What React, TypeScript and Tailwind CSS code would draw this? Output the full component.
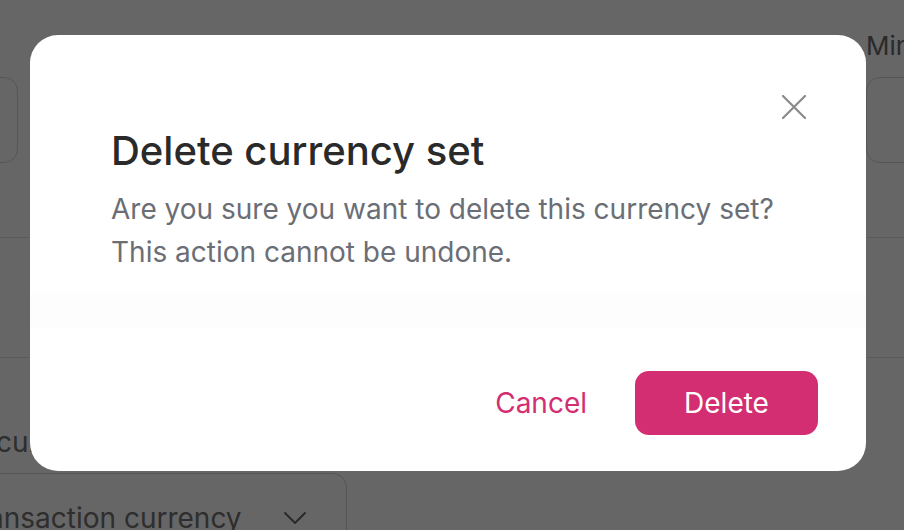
import { ChevronDown } from "lucide-react";

const CloseIcon = () => (
  <svg width="24" height="24" viewBox="0 0 24 24" fill="none">
    <path d="M1 1L23 23M23 1L1 23" stroke="#8a8a8a" strokeWidth="2.2" strokeLinecap="round" />
  </svg>
);

const BackgroundPage = () => (
  <div className="flex flex-col text-[#737373]">
    <div className="flex gap-[30px] pt-[28px]">
      <div className="ml-[-300px] w-[318px] shrink-0">
        <div className="h-[36px]" />
        <div className="mt-[13px] h-[86px] rounded-[14px] border border-[#d4d4d4]" />
      </div>
      <div className="w-[788px] shrink-0">
        <div className="h-[36px]" />
        <div className="mt-[13px] h-[86px] rounded-[14px] border border-[#d4d4d4]" />
      </div>
      <div className="w-[300px] shrink-0">
        <div className="h-[36px] text-[26px] leading-[36px] text-[#6a6a6a]">Min</div>
        <div className="mt-[13px] h-[86px] rounded-[14px] border border-[#d4d4d4]" />
      </div>
    </div>
    <div className="mt-[74px] border-t border-[#e2e2e2]" />
    <div className="mt-[119px] border-t border-[#e2e2e2]" />
    <p className="mt-[66px] ml-[-77px] text-[28px] leading-[36px]">Base currency</p>
    <div className="mt-[13px] ml-[-66px] flex h-[86px] w-[413px] items-center justify-between rounded-[14px] border border-[#d4d4d4] pl-[26px] pr-[31px] pt-[4px]">
      <span className="text-[28px] leading-[36px]">Transaction currency</span>
      <ChevronDown size={40} strokeWidth={1.2} className="text-[#6a6a6a]" />
    </div>
  </div>
);

export default function App() {
  return (
    <div className="relative h-[530px] w-[904px] overflow-hidden bg-white font-['Inter',sans-serif]">
      <BackgroundPage />
      <div className="absolute inset-0 bg-black/60">
        <div className="ml-[30px] mt-[35px] w-[836px]">
          <div className="relative flex flex-col rounded-[28px] bg-white">
            <button className="absolute right-[60px] top-[60px]" aria-label="Close">
              <CloseIcon />
            </button>
            <div className="px-[81px] pt-[92px]">
              <h2 className="text-[40px] font-medium leading-[48px] text-[#2a2a2a]">
                Delete currency set
              </h2>
              <p className="mt-[13px] text-[28px] leading-[43px] text-[#6b6e75]">
                Are you sure you want to delete this currency set?
                <br />
                This action cannot be undone.
              </p>
            </div>
            <div className="mt-[19px] h-[35px] bg-[#fdfdfd]" />
            <div className="mt-[43px] flex items-center justify-end gap-[48px] pb-[36px] pr-[48px]">
              <button className="text-[28px] leading-[36px] text-[#d32e72]">Cancel</button>
              <button className="flex h-[64px] w-[183px] items-center justify-center rounded-[14px] bg-[#d32e72] text-[28px] leading-[36px] text-white">
                Delete
              </button>
            </div>
          </div>
        </div>
      </div>
    </div>
  );
}
